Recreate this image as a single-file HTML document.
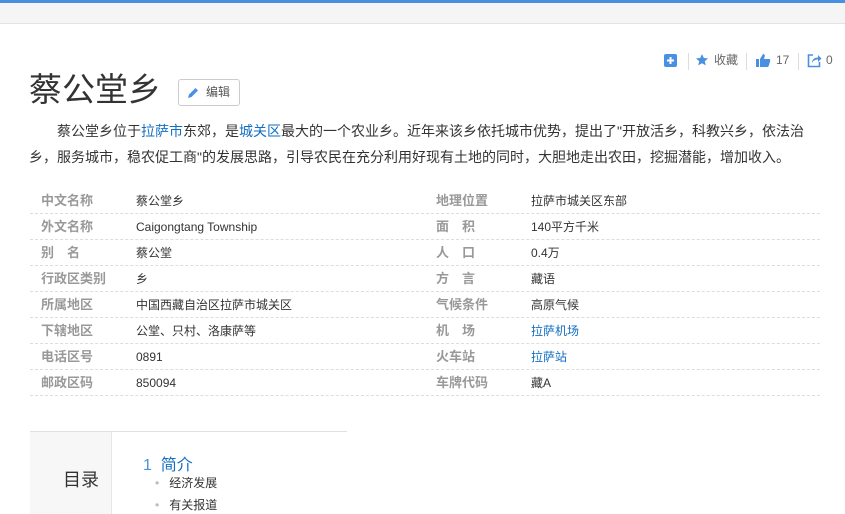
<!DOCTYPE html>
<html><head><meta charset="utf-8"><style>
*{margin:0;padding:0;box-sizing:border-box}
body{width:845px;height:514px;overflow:hidden;background:#fff;font-family:"Liberation Sans","Noto Sans CJK SC",sans-serif;color:#333;position:relative}
.topbar{position:absolute;left:0;top:0;width:845px;height:3px;background:#4a90e2}
.band{position:absolute;left:0;top:3px;width:845px;height:21px;background:#f5f5f5;border-bottom:1px solid #e3e3e3}
.abs{position:absolute;white-space:nowrap}
h1{position:absolute;left:29px;top:69px;font-size:33px;font-weight:normal;color:#333;line-height:42px;letter-spacing:0}
.edit{position:absolute;left:178px;top:79px;width:62px;height:27px;border:1px solid #ccc;border-radius:3px;font-size:12px;color:#555;line-height:25px;padding-left:27px}
.para{position:absolute;left:29px;top:118px;width:790px;font-size:14px;line-height:26px;text-indent:28px;color:#333}
a{color:#136ec2;text-decoration:none}
.row{position:absolute;left:30px;width:790px;height:26px;border-bottom:1px dashed #ddd;font-size:12px;line-height:26px}
.row span{position:absolute;top:0}
.l{color:#999;font-weight:bold;font-size:13px}
.tools{position:absolute;top:52px;font-size:12px;color:#666;line-height:16px}
.sep{position:absolute;top:53px;width:1px;height:17px;background:#ddd}
</style></head><body>
<div class="topbar"></div><div class="band"></div>
<svg class="abs" style="left:664px;top:54px" width="13" height="13"><rect width="13" height="13" rx="2" fill="#4a90e2"/><path d="M6.5 3v7M3 6.5h7" stroke="#fff" stroke-width="2"/></svg>
<div class="sep" style="left:688px"></div>
<svg class="abs" style="left:695px;top:53px" width="14" height="14"><path d="M7 1l1.8 4 4.2.4-3.2 2.8 1 4.2L7 10.2 3.2 12.4l1-4.2L1 5.4l4.2-.4z" fill="#4a90e2"/></svg>
<div class="tools" style="left:714px">收藏</div>
<div class="sep" style="left:746px"></div>
<svg class="abs" style="left:756px;top:53px" width="15" height="15"><rect x="0" y="6" width="3" height="8" fill="#4a90e2"/><path d="M4 6l3-5c1.5 0 2 1 1.7 2.5L8 6h5c1 0 1.5 1 1.2 2l-1.5 5c-.3.7-.8 1-1.5 1H4z" fill="#4a90e2"/></svg>
<div class="tools" style="left:776px">17</div>
<div class="sep" style="left:798px"></div>
<svg class="abs" style="left:807px;top:53px" width="15" height="15"><path d="M6 2H1.5v11.5h11V9" fill="none" stroke="#4a90e2" stroke-width="1.6"/><path d="M5 10c0-4 3-5.5 6-5.5V2l3.5 3.5L11 9V6.5C8 6.5 6.5 7.5 5 10z" fill="#4a90e2"/></svg>
<div class="tools" style="left:826px">0</div>
<h1>蔡公堂乡</h1>
<div class="edit"><svg class="abs" style="left:8px;top:7px" width="12" height="12"><path d="M1 11l1-3.5L8.5 1 11 3.5 4.5 10z" fill="#4a90e2"/></svg>编辑</div>
<div class="para">蔡公堂乡位于<a>拉萨市</a>东郊，是<a>城关区</a>最大的一个农业乡。近年来该乡依托城市优势，提出了"开放活乡，科教兴乡，依法治乡，服务城市，稳农促工商"的发展思路，引导农民在充分利用好现有土地的同时，大胆地走出农田，挖掘潜能，增加收入。</div>
<div class="row" style="top:188px"><span class="l" style="left:11px">中文名称</span><span style="left:106px">蔡公堂乡</span><span class="l" style="left:406px">地理位置</span><span style="left:501px">拉萨市城关区东部</span></div>
<div class="row" style="top:214px"><span class="l" style="left:11px">外文名称</span><span style="left:106px">Caigongtang Township</span><span class="l" style="left:406px">面　积</span><span style="left:501px">140平方千米</span></div>
<div class="row" style="top:240px"><span class="l" style="left:11px">别　名</span><span style="left:106px">蔡公堂</span><span class="l" style="left:406px">人　口</span><span style="left:501px">0.4万</span></div>
<div class="row" style="top:266px"><span class="l" style="left:11px">行政区类别</span><span style="left:106px">乡</span><span class="l" style="left:406px">方　言</span><span style="left:501px">藏语</span></div>
<div class="row" style="top:292px"><span class="l" style="left:11px">所属地区</span><span style="left:106px">中国西藏自治区拉萨市城关区</span><span class="l" style="left:406px">气候条件</span><span style="left:501px">高原气候</span></div>
<div class="row" style="top:318px"><span class="l" style="left:11px">下辖地区</span><span style="left:106px">公堂、只村、洛康萨等</span><span class="l" style="left:406px">机　场</span><span style="left:501px"><a>拉萨机场</a></span></div>
<div class="row" style="top:344px"><span class="l" style="left:11px">电话区号</span><span style="left:106px">0891</span><span class="l" style="left:406px">火车站</span><span style="left:501px"><a>拉萨站</a></span></div>
<div class="row" style="top:370px"><span class="l" style="left:11px">邮政区码</span><span style="left:106px">850094</span><span class="l" style="left:406px">车牌代码</span><span style="left:501px">藏A</span></div>
<div class="abs" style="left:30px;top:431px;width:317px;height:1px;background:#e0e0e0"></div>
<div class="abs" style="left:30px;top:432px;width:82px;height:82px;background:#f7f7f7;border-right:1px solid #e6e6e6"></div>
<div class="abs" style="left:63px;top:466px;font-size:18px;color:#333">目录</div>
<div class="abs" style="left:143px;top:451px;font-size:16px;color:#136ec2"><span style="color:#4a90e2">1</span>&nbsp;&nbsp;简介</div>
<div class="abs" style="left:155px;top:474px;font-size:12px;color:#333"><span style="color:#bbb">•</span>&nbsp;&nbsp;&nbsp;经济发展</div>
<div class="abs" style="left:155px;top:496px;font-size:12px;color:#333"><span style="color:#bbb">•</span>&nbsp;&nbsp;&nbsp;有关报道</div>
</body></html>
